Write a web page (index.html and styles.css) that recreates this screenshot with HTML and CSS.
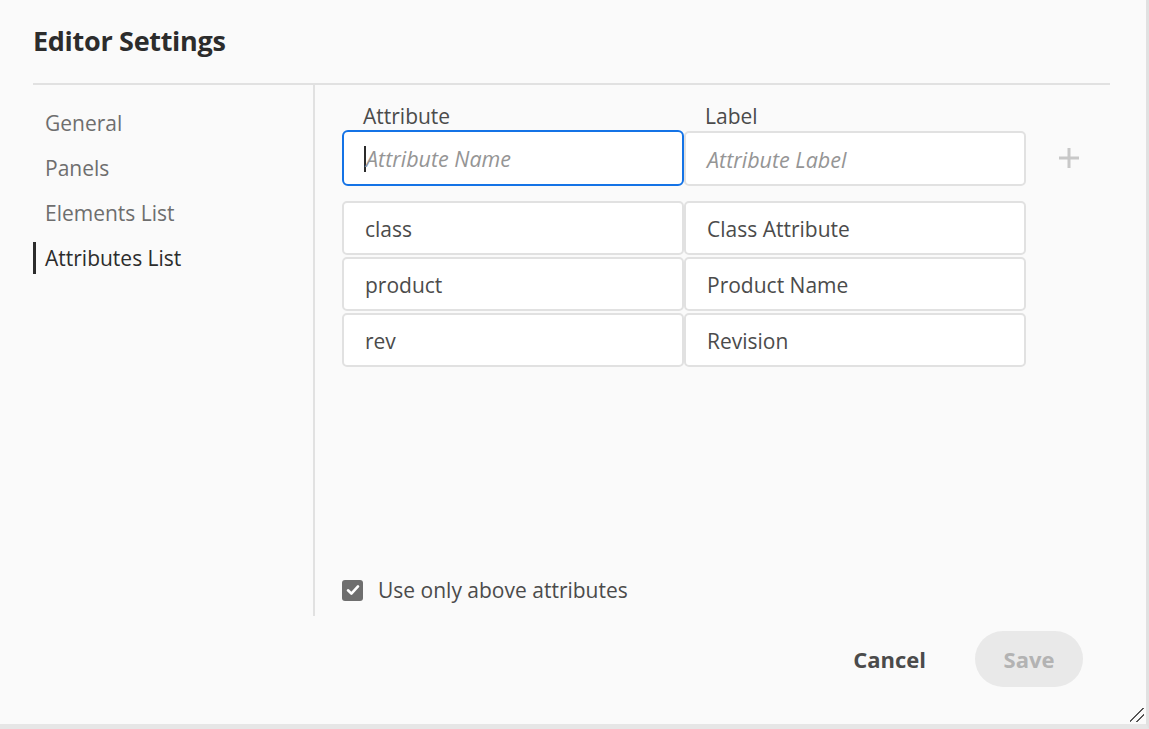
FILE: index.html
```html
<!DOCTYPE html>
<html>
<head>
<meta charset="utf-8">
<link rel="stylesheet" href="styles.css">
</head>
<body>
<div class="dialog">
  <header class="head">
    <h1 class="title">Editor Settings</h1>
  </header>
  <div class="main">
    <nav class="nav">
      <div class="nav-item">General</div>
      <div class="nav-item">Panels</div>
      <div class="nav-item">Elements List</div>
      <div class="nav-item active">Attributes List</div>
    </nav>
    <section class="content">
      <div class="grid">
        <div class="col-label">Attribute</div>
        <div class="col-label">Label</div>
        <div></div>
        <div class="field focus"><span class="caret"></span><span class="ph">Attribute Name</span></div>
        <div class="field"><span class="ph">Attribute Label</span></div>
        <div class="add">
          <svg width="24" height="24" viewBox="0 0 24 24"><path d="M12 2v20M2 12h20" stroke="#c8c8c8" stroke-width="3" fill="none"/></svg>
        </div>
      </div>
      <div class="rows">
        <div class="field">class</div>
        <div class="field">Class Attribute</div>
        <div class="field">product</div>
        <div class="field">Product Name</div>
        <div class="field">rev</div>
        <div class="field">Revision</div>
      </div>
      <label class="check">
        <span class="box"><svg width="14" height="12" viewBox="0 0 14 12"><path d="M2 6.3l3.4 3.3L12 2.4" stroke="#fff" stroke-width="2.6" fill="none" stroke-linecap="round" stroke-linejoin="round"/></svg></span>
        <span>Use only above attributes</span>
      </label>
    </section>
  </div>
  <footer class="foot">
    <button class="btn cancel">Cancel</button>
    <button class="btn save">Save</button>
  </footer>
  <div class="grip"></div>
</div>
</body>
</html>
```
FILE: styles.css
```css
* { box-sizing: border-box; }
html, body { margin: 0; height: 100%; }
body {
  background: #fafafa;
  font-family: "Open Sans", "Noto Sans", sans-serif;
  color: #4b4b4b;
  overflow: hidden;
}
.dialog {
  position: relative;
  width: 1149px;
  height: 729px;
  background: #fafafa;
  border-right: 3px solid #e1e1e1;
  border-bottom: 5px solid #e6e6e6;
  display: flex;
  flex-direction: column;
}
.head {
  height: 85px;
  margin: 0 36px 0 33px;
  border-bottom: 2px solid #e1e1e1;
  display: flex;
  align-items: flex-start;
}
.title {
  margin: 21px 0 0;
  font-size: 27px;
  font-weight: 700;
  color: #2c2c2c;
  letter-spacing: -0.3px;
  line-height: 40px;
}
.main {
  display: flex;
  height: 531px;
}
.nav {
  width: 315px;
  padding: 22px 0 0 33px;
  border-right: 2px solid #e1e1e1;
  display: flex;
  flex-direction: column;
  gap: 13px;
}
.nav-item {
  height: 32px;
  line-height: 32px;
  padding-left: 9px;
  font-size: 21px;
  color: #6e6e6e;
  border-left: 3px solid transparent;
}
.nav-item.active {
  color: #2c2c2c;
  border-left-color: #2c2c2c;
}
.content {
  flex: 1;
  padding: 19px 0 0 27px;
  display: flex;
  flex-direction: column;
}
.grid {
  display: grid;
  grid-template-columns: 342px 342px 84px;
  grid-template-rows: 26px 56px;
}
.col-label {
  padding-left: 21px;
  font-size: 21px;
  line-height: 24px;
  color: #4b4b4b;
}
.field {
  height: 54px;
  background: #fff;
  border: 2px solid #e1e1e1;
  border-radius: 5px;
  padding-left: 21px;
  font-size: 21px;
  line-height: 50px;
  color: #4b4b4b;
  display: flex;
  align-items: center;
  padding-top: 2px;
}
.grid .field { height: 56px; }
.grid .field:not(.focus) { height: 55px; margin-top: 1px; }
.field.focus {
  border-color: #1473e6;
  border-radius: 6px;
}
.caret {
  display: inline-block;
  width: 2px;
  height: 26px;
  background: #2c2c2c;
  margin-left: -1px;
}
.ph {
  font-style: italic;
  color: #959595;
  font-size: 21.5px;
}
.add {
  display: flex;
  align-items: center;
  justify-content: center;
  padding-left: 2px;
}
.rows {
  margin-top: 15px;
  display: grid;
  grid-template-columns: 342px 342px;
  grid-auto-rows: 54px;
  row-gap: 2px;
}
.check {
  margin-top: auto;
  margin-bottom: 12px;
  display: flex;
  align-items: center;
  gap: 15px;
  font-size: 21px;
  color: #4b4b4b;
  height: 28px;
}
.box {
  width: 21px;
  height: 21px;
  border-radius: 3px;
  background: #6e6e6e;
  display: flex;
  align-items: center;
  justify-content: center;
}
.foot {
  flex: 1;
  display: flex;
  align-items: center;
  justify-content: flex-end;
  padding-right: 63px;
  gap: 49px;
  padding-bottom: 22px;
}
.btn {
  font-family: "Open Sans", "Noto Sans", sans-serif;
  font-weight: 700;
  font-size: 22px;
  border: none;
  background: none;
  padding: 0;
}
.cancel { color: #4b4b4b; }
.save {
  width: 108px;
  height: 56px;
  border-radius: 28px;
  background: #e9e9e9;
  color: #b3b3b3;
}
.grip {
  position: absolute;
  right: 2px;
  bottom: 2px;
  width: 14px;
  height: 14px;
  background: linear-gradient(135deg, transparent 45%, #555 45%, #555 52%, transparent 52%, transparent 70%, #555 70%, #555 77%, transparent 77%);
}
```
